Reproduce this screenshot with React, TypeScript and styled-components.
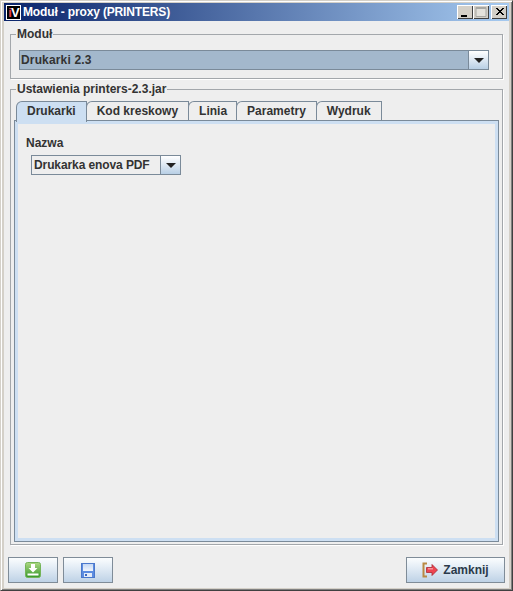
import React from 'react';
import styled, { createGlobalStyle } from 'styled-components';

const Global = createGlobalStyle`
  html, body { margin: 0; padding: 0; background: #eeeeee; }
  * { box-sizing: border-box; }
`;

const tabs = ['Drukarki', 'Kod kreskowy', 'Linia', 'Parametry', 'Wydruk'];

export default function App() {
  return (
    <>
      <Global />
      <Window>
        <TitleBar>
          <AppLogo><LogoDot>i</LogoDot>V</AppLogo>
          <TitleText>Moduł - proxy (PRINTERS)</TitleText>
          <Controls>
            <CtrlButton>
              <svg width="16" height="14" viewBox="0 0 16 14"><rect x="4" y="10" width="6" height="2" fill="#000" /></svg>
            </CtrlButton>
            <CtrlButton>
              <svg width="16" height="14" viewBox="0 0 16 14"><path d="M3 2.500h10v9H3z M3 3.500h10" fill="#e4e2dc" stroke="#a8a8a4" /></svg>
            </CtrlButton>
            <CloseButton>
              <svg width="16" height="14" viewBox="0 0 16 14"><path d="M5 3l7 7M6 3l7 7M12 3l-7 7M13 3l-7 7" stroke="#000" strokeWidth="1" /></svg>
            </CloseButton>
          </Controls>
        </TitleBar>
        <Body>
          <ModuleGroup>
            <Legend>Moduł</Legend>
            <ModuleBody>
              <Combo $wide>
                <ComboValue $selected>Drukarki 2.3</ComboValue>
                <ComboArrow><Arrow /></ComboArrow>
              </Combo>
            </ModuleBody>
          </ModuleGroup>
          <SettingsGroup>
            <Legend>Ustawienia printers-2.3.jar</Legend>
            <SettingsBody>
              <TabStrip>
                {tabs.map((t, i) => (
                  <Tab key={t} $active={i === 0}>{t}</Tab>
                ))}
              </TabStrip>
              <TabPanel>
                <FieldLabel>Nazwa</FieldLabel>
                <Combo>
                  <ComboValue>Drukarka enova PDF</ComboValue>
                  <ComboArrow><Arrow /></ComboArrow>
                </Combo>
              </TabPanel>
            </SettingsBody>
          </SettingsGroup>
          <Footer>
            <IconButton>
              <svg width="16" height="16" viewBox="0 0 16 16">
                <defs>
                  <linearGradient id="dl" x1="0" y1="0" x2="0" y2="1">
                    <stop offset="0" stopColor="#add884" />
                    <stop offset="1" stopColor="#36982a" />
                  </linearGradient>
                </defs>
                <rect x="0.5" y="0.5" width="15" height="15" rx="2" fill="url(#dl)" stroke="#74b458" />
                <path d="M6 2h4v4h2.500L8 10.500 3.500 6H6z" fill="#fff" />
                <rect x="2.500" y="11.500" width="11" height="2" fill="#fff" />
              </svg>
            </IconButton>
            <IconButton>
              <svg width="14" height="15" viewBox="0 0 14 15">
                <defs>
                  <linearGradient id="fl" x1="0" y1="0" x2="0" y2="1">
                    <stop offset="0" stopColor="#c4d8f4" />
                    <stop offset="1" stopColor="#f0f5fc" />
                  </linearGradient>
                </defs>
                <rect x="0.5" y="0.5" width="13" height="14" fill="#5c8ce0" stroke="#4a78cc" />
                <rect x="2" y="1" width="10" height="7" fill="url(#fl)" />
                <rect x="3" y="10" width="8" height="4" fill="#e4ecf8" />
                <rect x="4" y="11" width="2" height="2" fill="#3a68c0" />
              </svg>
            </IconButton>
            <Spacer />
            <CloseAction>
              <svg width="18" height="16" viewBox="0 0 18 16">
                <path d="M5 1.500H1.500v13H5" fill="none" stroke="#b98a44" strokeWidth="2" />
                <path d="M15.500 8L10 2.500v3H4.500v5H10v3z" fill="#ee4450" stroke="#a82a34" strokeWidth="0.800" />
                <path d="M6 6.800h5" stroke="#f8a8ae" strokeWidth="1.200" />
              </svg>
              Zamknij
            </CloseAction>
          </Footer>
        </Body>
      </Window>
    </>
  );
}

function Arrow() {
  return (
    <svg width="10" height="5" viewBox="0 0 10 5"><path d="M0 0h10L5 5z" fill="#222" /></svg>
  );
}

const Window = styled.div`
  width: 513px;
  height: 591px;
  display: flex;
  flex-direction: column;
  padding: 2px;
  background: #d4d0c8;
  border-top: 1px solid #d4d0c8;
  border-left: 1px solid #d4d0c8;
  border-right: 1px solid #404040;
  border-bottom: 1px solid #404040;
  box-shadow: inset 1px 1px 0 #fff, inset -1px -1px 0 #808080;
  font-family: "Liberation Sans", Arial, sans-serif;
  font-size: 12px;
  font-weight: 700;
  color: #333333;
`;

const TitleBar = styled.div`
  flex: none;
  height: 18px;
  margin: 0 1px 0 1px;
  display: flex;
  align-items: center;
  padding: 0 2px;
  background: linear-gradient(90deg, #0a246a 0%, #a6caf0 100%);
`;

const AppLogo = styled.div`
  flex: none;
  width: 15px;
  height: 15px;
  background: #000;
  color: #fff;
  border: 1px solid #fff;
  font-family: "Liberation Sans", sans-serif;
  font-size: 13px;
  font-weight: 700;
  line-height: 13px;
  text-align: center;
  letter-spacing: -1px;
`;

const LogoDot = styled.span`
  color: #e84040;
`;

const TitleText = styled.span`
  margin-left: 2px;
  font-size: 12px;
  letter-spacing: -0.15px;
  color: #fff;
`;

const Controls = styled.div`
  margin-left: auto;
  display: flex;
`;

const CtrlButton = styled.div`
  width: 16px;
  height: 14px;
  background: #d4d0c8;
  box-shadow: inset 1px 1px 0 #fff, inset -1px -1px 0 #404040;
`;

const CloseButton = styled(CtrlButton)`
  margin-left: 2px;
`;

const Body = styled.div`
  flex: 1;
  min-height: 0;
  margin: 0 1px 0 1px;
  display: flex;
  flex-direction: column;
  padding: 6px 6px 0 6px;
  background: #eeeeee;
`;

const Group = styled.fieldset`
  margin: 0;
  padding: 0;
  min-width: 0;
  border: 1px solid #a3a7ab;
  box-shadow: 1px 1px 0 #fff;
`;

const ModuleGroup = styled(Group)`
  flex: none;
  height: 52px;
`;

const ModuleBody = styled.div`
  padding: 9px 12px 0 8px;
`;

const SettingsGroup = styled(Group)`
  flex: none;
  height: 463px;
  margin-top: 3px;
`;

const SettingsBody = styled.div`
  padding: 5px 3px 0 3px;
`;

const Legend = styled.legend`
  margin-left: 5px;
  padding: 0 1px;
  line-height: 14px;
  background: #eeeeee;
`;

const Combo = styled.div<{ $wide?: boolean }>`
  display: flex;
  height: 20px;
  width: ${p => (p.$wide ? '470px' : '150px')};
  border: 1px solid #7a8a99;
`;

const ComboValue = styled.div<{ $selected?: boolean }>`
  flex: 1;
  padding-left: ${p => (p.$selected ? '1px' : '2px')};
  line-height: 18px;
  letter-spacing: ${p => (p.$selected ? '0.15px' : '-0.1px')};
  background: ${p => (p.$selected ? '#a3b8cc' : '#eeeeee')};
  border-right: 1px solid #7a8a99;
  white-space: nowrap;
`;

const ComboArrow = styled.div`
  width: 19px;
  display: flex;
  align-items: center;
  justify-content: center;
  background: linear-gradient(180deg, #ffffff 0%, #dde8f3 50%, #b8cfe5 100%);
`;

const TabStrip = styled.div`
  display: flex;
  height: 19px;
  padding-left: 2px;
`;

const Tab = styled.div<{ $active?: boolean }>`
  flex: none;
  height: ${p => (p.$active ? '21px' : '19px')};
  padding: 2px 10px 0 10px;
  margin-right: -1px;
  line-height: 15px;
  background: ${p => (p.$active ? '#cddff2' : '#eeeeee')};
  border: 1px solid #7a8a99;
  border-bottom: none;
  border-top-left-radius: 6px 6px;
  position: relative;
  z-index: ${p => (p.$active ? 1 : 0)};

  &:nth-child(3) {
    padding-right: 9px;
  }
`;

const TabPanel = styled.div`
  height: 422px;
  padding: 15px 0 0 11px;
  background: #eeeeee;
  border: 1px solid #7a8a99;
  box-shadow: inset 0 0 0 3px #cddff2;

  ${Combo} {
    margin-left: 5px;
  }
`;

const FieldLabel = styled.div`
  line-height: 14px;
  margin: 0 0 5px 0;
`;

const Footer = styled.div`
  flex: none;
  display: flex;
  margin: 12px -2px 0 -2px;
  gap: 5px;
`;

const Spacer = styled.div`
  flex: 1;
`;

const IconButton = styled.div`
  width: 50px;
  height: 26px;
  display: flex;
  align-items: center;
  justify-content: center;
  border: 1px solid #7f8c98;
  color: #2b3a4a;
  background: linear-gradient(180deg, #fbfdfe 0%, #dde8f3 50%, #bed2e6 100%);
`;

const CloseAction = styled(IconButton)`
  width: 99px;
  gap: 3px;
`;
